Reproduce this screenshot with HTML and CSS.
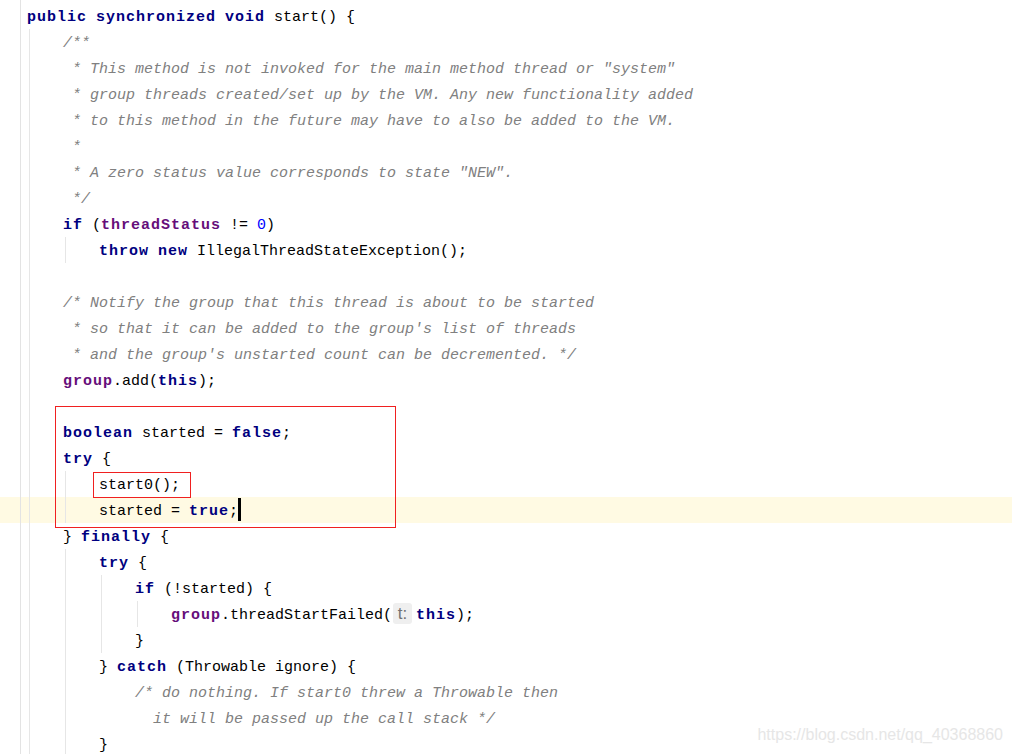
FILE: index.html
```html
<!DOCTYPE html>
<html>
<head>
  <title>Thread.start</title>
  <link rel="stylesheet" href="styles.css">
</head>
<body>
<div class="editor">
  <div class="ln"><b class="kw">public</b> <b class="kw">synchronized</b> <b class="kw">void</b> start() {</div>
  <div class="blk">
    <div class="ln cm">/**</div>
    <div class="ln cm"> * This method is not invoked for the main method thread or "system"</div>
    <div class="ln cm"> * group threads created/set up by the VM. Any new functionality added</div>
    <div class="ln cm"> * to this method in the future may have to also be added to the VM.</div>
    <div class="ln cm"> *</div>
    <div class="ln cm"> * A zero status value corresponds to state "NEW".</div>
    <div class="ln cm"> */</div>
    <div class="ln"><b class="kw">if</b> (<b class="fld">threadStatus</b> != <span class="num">0</span>)</div>
    <div class="blk">
      <div class="ln"><b class="kw">throw</b> <b class="kw">new</b> IllegalThreadStateException();</div>
    </div>
    <div class="ln"></div>
    <div class="ln cm">/* Notify the group that this thread is about to be started</div>
    <div class="ln cm"> * so that it can be added to the group's list of threads</div>
    <div class="ln cm"> * and the group's unstarted count can be decremented. */</div>
    <div class="ln"><b class="fld">group</b>.add(<b class="kw">this</b>);</div>
    <div class="ln"></div>
    <div class="ln"><b class="kw">boolean</b> started = <b class="kw">false</b>;</div>
    <div class="ln"><b class="kw">try</b> {</div>
    <div class="blk">
      <div class="ln">start0();</div>
      <div class="ln cur">started = <b class="kw">true</b>;<span class="caret"></span></div>
    </div>
    <div class="ln">} <b class="kw">finally</b> {</div>
    <div class="blk">
      <div class="ln"><b class="kw">try</b> {</div>
      <div class="blk">
        <div class="ln"><b class="kw">if</b> (!started) {</div>
        <div class="blk">
          <div class="ln"><b class="fld">group</b>.threadStartFailed(<span class="hint">t:</span><b class="kw">this</b>);</div>
        </div>
        <div class="ln">}</div>
      </div>
      <div class="ln">} <b class="kw">catch</b> (Throwable ignore) {</div>
      <div class="blk no-guide">
        <div class="ln cm">/* do nothing. If start0 threw a Throwable then</div>
        <div class="ln cm">  it will be passed up the call stack */</div>
      </div>
      <div class="ln">}</div>
    </div>
  </div>
</div>

<div class="mark mark-big"></div>
<div class="mark mark-small"></div>
<div class="watermark">https://blog.csdn.net/qq_40368860</div>
</body>
</html>
```

FILE: styles.css
```css
html {
    overflow: hidden;
}

body {
    background-color: #ffffff;
    margin: 0;
    padding: 0;
    font-family: "Liberation Mono", "DejaVu Sans Mono", monospace;
    font-size: 15px;
    color: #000000;
}

.editor {
    margin-left: 20px;
    border-left: 1px solid #e3e3e3;
    padding: 3px 0 0 6px;
    min-height: 100vh;
    box-sizing: border-box;
}

.ln {
    height: 26px;
    padding-top: 2px;
    box-sizing: border-box;
    line-height: 26px;
    white-space: pre;
    position: relative;
}

.blk {
    margin-left: 2px;
    border-left: 1px solid #e6e6e6;
    padding-left: 33px;
}

.blk.no-guide {
    border-left-color: transparent;
}

.kw {
    color: #000080;
    font-weight: bold;
    letter-spacing: 1px;
}

.fld {
    color: #660e7a;
    font-weight: bold;
    letter-spacing: 1px;
}

.num {
    color: #0000ff;
}

.cm {
    color: #808080;
    font-style: italic;
}

/* current line */
.cur::before {
    content: "";
    position: absolute;
    top: 0;
    left: -99px;
    width: 1012px;
    height: 26px;
    background-color: #fffae3;
    z-index: -1;
}

.caret {
    display: inline-block;
    width: 3px;
    height: 23px;
    background-color: #000000;
    vertical-align: middle;
    position: relative;
    top: -2px;
}

.hint {
    display: inline-block;
    width: 19px;
    height: 21px;
    line-height: 21px;
    margin: 0 4px 0 1px;
    background-color: #efefef;
    border-radius: 3px;
    color: #737373;
    font-family: "Liberation Sans", Arial, sans-serif;
    font-size: 17px;
    text-align: center;
    vertical-align: middle;
    position: relative;
    top: -2px;
}

.mark {
    position: absolute;
    border: 1px solid #f02020;
    box-sizing: border-box;
}

.mark-big {
    left: 55px;
    top: 406px;
    width: 341px;
    height: 122px;
}

.mark-small {
    left: 93px;
    top: 472px;
    width: 98px;
    height: 26px;
}

.watermark {
    position: absolute;
    right: 9px;
    bottom: 10px;
    font-family: "Liberation Sans", Arial, sans-serif;
    font-size: 16px;
    color: #e6e6e6;
}
```
